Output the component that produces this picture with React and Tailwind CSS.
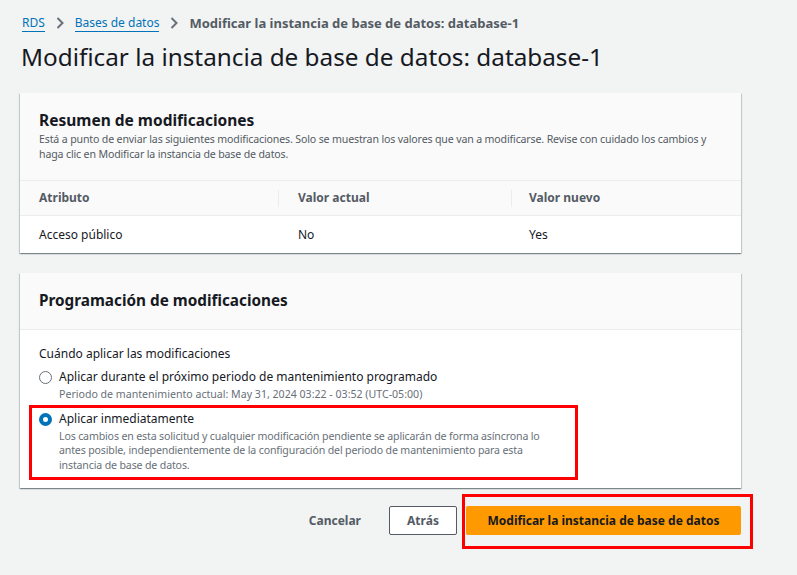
import React from "react";

const Chevron = () => (
  <svg width="10" height="14" viewBox="0 0 10 14" className="mx-[10px]">
    <path d="M2.5 2 L7.5 7 L2.5 12" fill="none" stroke="#687078" strokeWidth="2" />
  </svg>
);

const Radio = ({ checked }) =>
  checked ? (
    <span className="mt-[4px] h-[13px] w-[13px] shrink-0 rounded-full border-[4px] border-[#0073bb] bg-white" />
  ) : (
    <span className="mt-[4px] h-[13px] w-[13px] shrink-0 rounded-full border-[1.5px] border-[#687078] bg-white" />
  );

const cardShadow =
  "bg-white shadow-[0_1px_1px_0_rgba(0,28,36,0.3),1px_1px_1px_0_rgba(0,28,36,0.15),-1px_1px_1px_0_rgba(0,28,36,0.15)]";

const App = () => {
  return (
    <div className="min-h-[575px] w-[797px] bg-[#f2f3f3] px-[20px] pt-[14px] text-[#16191f] font-['Noto_Sans',sans-serif]">
      {/* Breadcrumb */}
      <nav className="ml-[2px] flex items-center text-[13px] leading-[18px]">
        <span className="border-b border-[#0073bb] text-[12px] leading-[16px] text-[#0073bb]">RDS</span>
        <Chevron />
        <span className="border-b border-[#0073bb] text-[12px] leading-[16px] text-[#0073bb]">Bases de datos</span>
        <Chevron />
        <span className="font-bold text-[#545b64]">Modificar la instancia de base de datos: database-1</span>
      </nav>

      <h1 className="ml-[1px] mt-[9px] text-[24.3px] leading-[32px] font-normal">
        Modificar la instancia de base de datos: database-1
      </h1>

      {/* Summary card */}
      <section className={`mt-[20px] w-[721px] ${cardShadow}`}>
        <div className="border-b border-[#eaeded] bg-[#fafafa] px-[19px] pb-[18px] pt-[16px]">
          <h2 className="text-[15.5px] font-bold leading-[22px]">Resumen de modificaciones</h2>
          <p className="mt-[1px] text-[10.6px] leading-[15px] tracking-[-0.15px] text-[#545b64]">
            Está a punto de enviar las siguientes modificaciones. Solo se muestran los valores que van a modificarse. Revise con cuidado los cambios y haga clic en Modificar la instancia de base de datos.
          </p>
        </div>
        <div className="grid grid-cols-[258px_233px_1fr] border-b border-[#eaeded] bg-[#fafafa] text-[12px] font-bold text-[#545b64]">
          <div className="flex h-[34px] items-center px-[19px]">Atributo</div>
          <div className="flex h-[34px] items-center">
            <span className="h-[17px] border-l border-[#eaeded]" />
            <span className="pl-[19px]">Valor actual</span>
          </div>
          <div className="flex h-[34px] items-center">
            <span className="h-[17px] border-l border-[#eaeded]" />
            <span className="pl-[17px]">Valor nuevo</span>
          </div>
        </div>
        <div className="grid h-[37px] grid-cols-[258px_233px_1fr] items-center text-[12px]">
          <div className="px-[19px]">Acceso público</div>
          <div className="pl-[20px]">No</div>
          <div className="pl-[18px]">Yes</div>
        </div>
      </section>

      {/* Schedule card */}
      <section className={`mt-[20px] w-[721px] ${cardShadow}`}>
        <div className="border-b border-[#eaeded] bg-[#fafafa] px-[19px] pb-[17px] pt-[15px]">
          <h2 className="text-[15.3px] font-bold leading-[24px]">Programación de modificaciones</h2>
        </div>
        <div className="px-[19px] pb-[16px] pt-[14px] text-[12px]">
          <div className="leading-[20px]">Cuándo aplicar las modificaciones</div>
          <label className="mt-[3px] flex gap-[7px]">
            <Radio />
            <div>
              <div className="leading-[20px]">Aplicar durante el próximo periodo de mantenimiento programado</div>
              <div className="text-[10.6px] leading-[14.5px] text-[#687078]">
                Periodo de mantenimiento actual: May 31, 2024 03:22 - 03:52 (UTC-05:00)
              </div>
            </div>
          </label>
          <div className="relative mt-[7px]">
            <label className="flex gap-[7px]">
              <Radio checked />
              <div>
                <div className="leading-[20px]">Aplicar inmediatamente</div>
                <div className="w-[492px] text-[10.6px] leading-[14.5px] tracking-[-0.15px] text-[#687078]">
                  Los cambios en esta solicitud y cualquier modificación pendiente se aplicarán de forma asíncrona lo antes posible, independientemente de la configuración del periodo de mantenimiento para esta instancia de base de datos.
                </div>
              </div>
            </label>
            <div className="pointer-events-none absolute left-[-10px] top-[-4px] h-[75px] w-[549px] border-[3px] border-[#ff0000]" />
          </div>
        </div>
      </section>

      {/* Actions */}
      <div className="mt-[18px] flex w-[721px] items-center justify-end text-[12px] font-bold text-[#545b64]">
        <span className="mr-[28px]">Cancelar</span>
        <button className="mr-[9px] h-[29px] w-[68px] rounded-[2px] border border-[#545b64] bg-white">Atrás</button>
        <div className="relative">
          <button className="h-[29px] w-[275px] rounded-[2px] bg-[#ff9900] text-[#16191f]">
            Modificar la instancia de base de datos
          </button>
          <div className="pointer-events-none absolute left-[-4px] top-[-12px] h-[55px] w-[291px] border-[3px] border-[#ff0000]" />
        </div>
      </div>
    </div>
  );
};

export default App;
